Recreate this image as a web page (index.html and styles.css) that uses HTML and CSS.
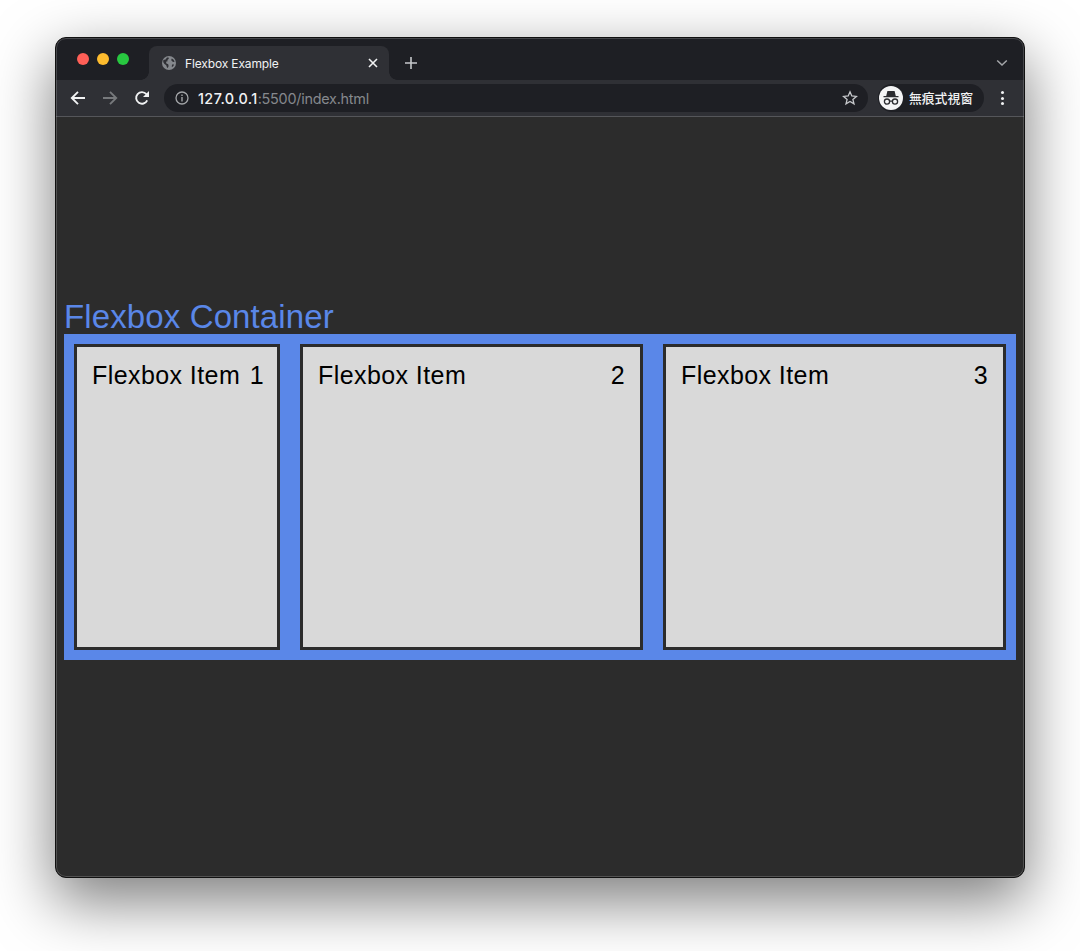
FILE: index.html
```html
<!DOCTYPE html>
<html lang="en">
<head>
    <meta charset="UTF-8">
    <meta name="viewport" content="width=device-width, initial-scale=1.0">
    <title>Flexbox Example</title>
    <link rel="stylesheet" href="styles.css">
</head>
<body>
    <div class="window">
        <div class="tabstrip">
            <div class="lights">
                <span class="light red"></span>
                <span class="light yellow"></span>
                <span class="light green"></span>
            </div>
            <div class="tab">
                <svg class="globe" width="14" height="14" viewBox="0 0 14 14">
                    <circle cx="7" cy="7" r="7" fill="#85888d"/>
                    <path d="M1.4 4 L3.6 3.4 L5 1.6 L6.6 1.4 L6.8 2.8 L5.4 4 L5.6 5.2 L4 5.8 L4.4 7.4 L6.2 8.2 L6.6 10 L5.8 12 L5 11.6 L4.2 9.2 L2.2 7.8 L1.2 6 Z" fill="#2f3035"/>
                    <path d="M9.8 2.4 L11.6 3.8 L12.6 5.8 L11.4 6 L10 5.2 L9.2 4 Z M10 8.4 L12.2 8.6 L11 10.6 L9.8 11 Z" fill="#2f3035"/>
                </svg>
                <span class="tab-title">Flexbox Example</span>
                <svg class="tab-close" width="10" height="10" viewBox="0 0 10 10">
                    <path d="M1 1 L9 9 M9 1 L1 9" stroke="#f1f2f3" stroke-width="1.6"/>
                </svg>
            </div>
            <svg class="new-tab" width="14" height="14" viewBox="0 0 14 14">
                <path d="M7 1 V13 M1 7 H13" stroke="#c6c8cb" stroke-width="1.6"/>
            </svg>
            <svg class="tab-menu" width="12" height="8" viewBox="0 0 12 8">
                <path d="M1.2 1.5 L6 6 L10.8 1.5" stroke="#a3a5a8" stroke-width="1.5" fill="none"/>
            </svg>
        </div>
        <div class="toolbar">
            <svg class="nav" width="16" height="16" viewBox="0 0 16 16">
                <path d="M15 8 H2 M8 1.8 L1.8 8 L8 14.2" stroke="#f1f2f3" stroke-width="1.9" fill="none"/>
            </svg>
            <svg class="nav" width="16" height="16" viewBox="0 0 16 16">
                <path d="M1 8 H14 M8 1.8 L14.2 8 L8 14.2" stroke="#77797c" stroke-width="1.9" fill="none"/>
            </svg>
            <svg class="nav" width="16" height="16" viewBox="0 0 16 16">
                <path d="M13.2 10.4 A5.8 5.8 0 1 1 12.4 4.2" stroke="#f1f2f3" stroke-width="1.9" fill="none"/>
                <path d="M15 1 V7 H9 Z" fill="#f1f2f3"/>
            </svg>
            <div class="omnibox">
                <svg width="14" height="14" viewBox="0 0 14 14">
                    <circle cx="7" cy="7" r="6" stroke="#a3a5a8" stroke-width="1.3" fill="none"/>
                    <path d="M7 6 V10.4 M7 3.6 V5" stroke="#a3a5a8" stroke-width="1.4"/>
                </svg>
                <span class="url"><b>127.0.0.1</b>:5500/index.html</span>
                <svg class="star" width="16" height="16" viewBox="0 0 16 16">
                    <path d="M8 1.8 L9.8 6 L14.4 6.4 L10.9 9.4 L12 13.9 L8 11.5 L4 13.9 L5.1 9.4 L1.6 6.4 L6.2 6 Z" stroke="#c6c8cb" stroke-width="1.3" fill="none"/>
                </svg>
            </div>
            <div class="incognito">
                <span class="avatar">
                    <svg width="18" height="16" viewBox="0 0 18 16">
                        <path d="M5.4 1 H12.6 L13.8 6 H16.5 V7.2 H1.5 V6 H4.2 Z" fill="#2b2c30"/>
                        <circle cx="5" cy="11.6" r="2.6" stroke="#2b2c30" stroke-width="1.3" fill="none"/>
                        <circle cx="13" cy="11.6" r="2.6" stroke="#2b2c30" stroke-width="1.3" fill="none"/>
                        <path d="M7.6 11.2 H10.4" stroke="#2b2c30" stroke-width="1.2"/>
                    </svg>
                </span>
                <span class="incognito-label">無痕式視窗</span>
            </div>
            <div class="kebab"><i></i><i></i><i></i></div>
        </div>
        <div class="page">
            <h1>Flexbox Container</h1>
            <div class="container">
                <div class="item item-small"><span>Flexbox Item</span><span>1</span></div>
                <div class="item"><span>Flexbox Item</span><span>2</span></div>
                <div class="item"><span>Flexbox Item</span><span>3</span></div>
            </div>
        </div>
    </div>
</body>
</html>
```

FILE: styles.css
```css
html, body {
    height: 951px;
}
body {
    margin: 0;
    padding: 37px 55px 0;
    box-sizing: border-box;
    overflow: hidden;
    background-color: #fff;
    font-family: "Liberation Sans", Arial, sans-serif;
}
.window {
    position: relative;
    height: 841px;
    box-sizing: border-box;
    display: flex;
    flex-direction: column;
    border: 1px solid #111;
    border-radius: 11px;
    overflow: hidden;
    background-color: #2c2c2c;
    box-shadow: 0 22px 60px 2px rgba(0, 0, 0, .5);
}
/* faint light edge on top of the content */
.window::after {
    content: "";
    position: absolute;
    inset: 0;
    border: 1px solid rgba(255, 255, 255, .18);
    border-radius: 10px;
    pointer-events: none;
}
.tabstrip {
    height: 42px;
    flex: none;
    display: flex;
    align-items: flex-end;
    background-color: #1e1f24;
}
.lights {
    display: flex;
    gap: 8px;
    margin: 0 20px 15px 21px;
}
.light {
    width: 12px;
    height: 12px;
    border-radius: 50%;
}
.red { background-color: #ff5f57; }
.yellow { background-color: #febc2e; }
.green { background-color: #28c840; }
.tab {
    position: relative;
    width: 240px;
    height: 34px;
    display: flex;
    align-items: center;
    padding: 0 11px 0 13px;
    box-sizing: border-box;
    border-radius: 8px 8px 0 0;
    background-color: #2f3035;
    color: #f1f2f3;
    font-family: Inter, sans-serif;
    font-size: 12px;
    letter-spacing: -.14px;
}
.tab::before, .tab::after {
    content: "";
    position: absolute;
    bottom: 0;
    width: 8px;
    height: 8px;
}
.tab::before {
    left: -8px;
    background: radial-gradient(circle at 0 0, #1e1f24 7.5px, #2f3035 8px);
}
.tab::after {
    right: -8px;
    background: radial-gradient(circle at 100% 0, #1e1f24 7.5px, #2f3035 8px);
}
.tab-title {
    margin-left: 9px;
    flex: 1;
}
.new-tab {
    margin: 0 0 10px 15px;
}
.tab-menu {
    margin: 0 16px 13px auto;
}
.toolbar {
    height: 36px;
    flex: none;
    display: flex;
    align-items: center;
    padding-left: 14px;
    background-color: #2f3035;
    border-bottom: 1px solid #55565a;
}
.nav {
    margin-right: 16px;
}
.omnibox {
    width: 704px;
    height: 28px;
    margin-left: -2px;
    display: flex;
    align-items: center;
    padding: 0 10px 0 11px;
    box-sizing: border-box;
    border-radius: 14px;
    background-color: #1e1f24;
    font-family: Inter, sans-serif;
    font-size: 14.4px;
    letter-spacing: -.25px;
    color: #85888d;
}
.url {
    margin-left: 9px;
    flex: 1;
}
.url b {
    font-weight: 500;
    letter-spacing: .4px;
    color: #f1f2f3;
}
.incognito {
    width: 106px;
    height: 28px;
    margin-left: 10px;
    display: flex;
    align-items: center;
    padding-left: 1px;
    box-sizing: border-box;
    border-radius: 14px;
    background-color: #1e1f24;
}
.avatar {
    width: 24px;
    height: 24px;
    display: flex;
    align-items: center;
    justify-content: center;
    border-radius: 50%;
    background-color: #f4f4f5;
}
.incognito-label {
    margin-left: 6px;
    font-family: "Noto Sans CJK TC", sans-serif;
    font-size: 12.8px;
    line-height: 24px;
    font-weight: 500;
    color: #f1f2f3;
}
.kebab {
    margin-left: 17px;
    display: flex;
    flex-direction: column;
    gap: 2.5px;
}
.kebab i {
    width: 3px;
    height: 3px;
    border-radius: 50%;
    background-color: #f1f2f3;
}
.page {
    flex: 1;
    padding: 183px 8px 0;
}
h1 {
    margin: 0;
    font-size: 33px;
    font-weight: 400;
    line-height: 34px;
    letter-spacing: .12px;
    color: #5a87e8;
}
.container {
    height: 326px;
    display: flex;
    gap: 20px;
    padding: 10px;
    box-sizing: border-box;
    background-color: #5a87e8;
}
.item {
    flex: 1;
    display: flex;
    justify-content: space-between;
    padding: 14px 15px;
    border: 3px solid #2c2c2c;
    background-color: #d9d9d9;
    color: #000;
    font-size: 25px;
    line-height: 29px;
    letter-spacing: .42px;
}
.item-small {
    flex: none;
    width: 206px;
    padding-right: 13px;
    box-sizing: border-box;
}
```
